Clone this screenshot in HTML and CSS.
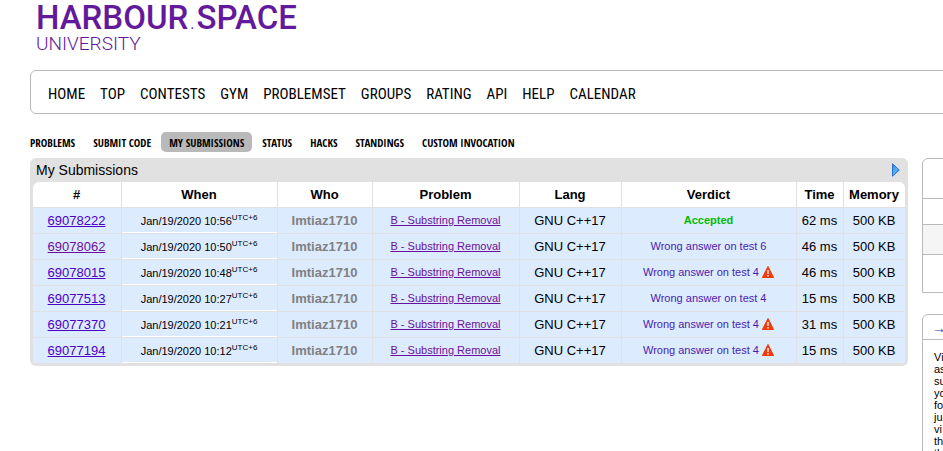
FILE: index.html
```html
<!DOCTYPE html>
<html lang="en">
<head>
<meta charset="utf-8">
<title>My Submissions</title>
<link rel="stylesheet" href="styles.css">
</head>
<body>
<div class="page">
  <header class="logo">
    <div class="logo-name">HARBOUR<span class="logo-dot">.</span>SPACE</div>
    <div class="logo-sub">UNIVERSITY</div>
  </header>
  <nav class="menu">
    <a href="#">HOME</a><a href="#">TOP</a><a href="#">CONTESTS</a><a href="#">GYM</a><a href="#">PROBLEMSET</a><a href="#">GROUPS</a><a href="#">RATING</a><a href="#">API</a><a href="#">HELP</a><a href="#">CALENDAR</a>
  </nav>
  <div class="columns">
    <main>
      <nav class="submenu">
        <a href="#">PROBLEMS</a><a href="#">SUBMIT CODE</a><a href="#" class="current">MY SUBMISSIONS</a><a href="#">STATUS</a><a href="#">HACKS</a><a href="#">STANDINGS</a><a href="#">CUSTOM INVOCATION</a>
      </nav>
      <section class="datatable">
        <div class="title">
          <span>My Submissions</span>
          <svg class="arrow" viewBox="0 0 8 14" width="8" height="14" aria-hidden="true">
            <defs><linearGradient id="blue" x1="0" y1="0" x2="1" y2="1"><stop offset="0" stop-color="#2f80d8"/><stop offset=".5" stop-color="#58b4f5"/><stop offset="1" stop-color="#2463c0"/></linearGradient></defs>
            <path d="M.5.8 7.3 7 .5 13.200z" fill="url(#blue)" stroke="#2b6fd0"/>
          </svg>
        </div>
        <table>
          <colgroup><col class="c-id"><col class="c-when"><col class="c-who"><col class="c-problem"><col class="c-lang"><col><col class="c-time"><col class="c-memory"></colgroup>
          <thead>
            <tr><th>#</th><th>When</th><th>Who</th><th>Problem</th><th>Lang</th><th>Verdict</th><th>Time</th><th>Memory</th></tr>
          </thead>
          <tbody>
            <tr><td><a href="#">69078222</a></td><td class="when">Jan/19/2020 10:56<sup>UTC+6</sup></td><td class="who">Imtiaz1710</td><td class="problem"><a href="#">B - Substring Removal</a></td><td>GNU C++17</td><td class="verdict"><span class="accepted">Accepted</span></td><td>62 ms</td><td>500 KB</td></tr>
            <tr><td><a href="#" class="visited">69078062</a></td><td class="when">Jan/19/2020 10:50<sup>UTC+6</sup></td><td class="who">Imtiaz1710</td><td class="problem"><a href="#">B - Substring Removal</a></td><td>GNU C++17</td><td class="verdict">Wrong answer on test 6</td><td>46 ms</td><td>500 KB</td></tr>
            <tr><td><a href="#">69078015</a></td><td class="when">Jan/19/2020 10:48<sup>UTC+6</sup></td><td class="who">Imtiaz1710</td><td class="problem"><a href="#">B - Substring Removal</a></td><td>GNU C++17</td><td class="verdict">Wrong answer on test 4 <svg class="warn" viewBox="0 0 12 12" width="12" height="12"><path d="M6 .5 11.600 11.500H.4z" fill="#f03c0a" stroke="#f03c0a" stroke-linejoin="round"/><path d="M6 4v4M6 9v1.500" stroke="#ffe9dc" stroke-width="1.500"/></svg></td><td>46 ms</td><td>500 KB</td></tr>
            <tr><td><a href="#">69077513</a></td><td class="when">Jan/19/2020 10:27<sup>UTC+6</sup></td><td class="who">Imtiaz1710</td><td class="problem"><a href="#">B - Substring Removal</a></td><td>GNU C++17</td><td class="verdict">Wrong answer on test 4</td><td>15 ms</td><td>500 KB</td></tr>
            <tr><td><a href="#">69077370</a></td><td class="when">Jan/19/2020 10:21<sup>UTC+6</sup></td><td class="who">Imtiaz1710</td><td class="problem"><a href="#">B - Substring Removal</a></td><td>GNU C++17</td><td class="verdict">Wrong answer on test 4 <svg class="warn" viewBox="0 0 12 12" width="12" height="12"><path d="M6 .5 11.600 11.500H.4z" fill="#f03c0a" stroke="#f03c0a" stroke-linejoin="round"/><path d="M6 4v4M6 9v1.500" stroke="#ffe9dc" stroke-width="1.500"/></svg></td><td>31 ms</td><td>500 KB</td></tr>
            <tr><td><a href="#">69077194</a></td><td class="when">Jan/19/2020 10:12<sup>UTC+6</sup></td><td class="who">Imtiaz1710</td><td class="problem"><a href="#">B - Substring Removal</a></td><td>GNU C++17</td><td class="verdict">Wrong answer on test 4 <svg class="warn" viewBox="0 0 12 12" width="12" height="12"><path d="M6 .5 11.600 11.500H.4z" fill="#f03c0a" stroke="#f03c0a" stroke-linejoin="round"/><path d="M6 4v4M6 9v1.500" stroke="#ffe9dc" stroke-width="1.500"/></svg></td><td>15 ms</td><td>500 KB</td></tr>
          </tbody>
        </table>
      </section>
    </main>
    <aside>
      <div class="box contest">
        <div class="contest-name"></div>
        <div class="contest-state"></div>
        <div class="contest-stripe"></div>
        <div class="contest-foot"></div>
      </div>
      <div class="box">
        <div class="caption">→</div>
        <p class="note">Vi<br>as<br>su<br>yo<br>fo<br>ju<br>vi<br>th<br>th</p>
      </div>
    </aside>
  </div>
</div>
</body>
</html>
```

FILE: styles.css
```css
* { box-sizing: border-box; }

body {
  margin: 0;
  overflow: hidden;
  background: #fff;
  color: #000;
  font: 13px/16px "Liberation Sans", Arial, sans-serif;
}

/* The sidebar runs past the right edge of the window. */
.page {
  width: calc(100% + 200px);
  padding-left: 30px;
}

.logo {
  height: 70px;
  padding-left: 6px;
  color: #63199b;
  font-family: Roboto, sans-serif;
}
.logo-name { font-size: 33px; line-height: 36px; font-weight: 500; }
.logo-dot { margin: 0 2px; font-size: 16px; line-height: 16px; font-weight: 400; }
.logo-sub { font-size: 19px; line-height: 16px; font-weight: 300; }

.menu {
  display: flex;
  gap: 15px;
  height: 44px;
  padding-left: 17px;
  border: 1px solid #b9b9b9;
  border-radius: 6px;
  font: 15px/46px "Roboto Condensed", sans-serif;
}
.menu a, .submenu a { color: #000; text-decoration: none; white-space: nowrap; }

.columns {
  display: grid;
  grid-template-columns: minmax(0, 1fr) 221px;
  column-gap: 14px;
}

.submenu {
  display: flex;
  gap: 2px;
  height: 20px;
  margin: 18px 0 6px -8px;
  font: bold 11px/22px "Liberation Sans Narrow", "Open Sans Condensed", "Roboto Condensed", sans-serif;
}
.submenu a { padding: 0 8px; border-radius: 5px; }
.submenu .current { background: #b9b9b9; }

.datatable {
  padding: 0 3px 3px;
  background: #e1e1e1;
  border-radius: 6px;
}
.title {
  display: flex;
  justify-content: space-between;
  align-items: center;
  height: 24px;
  padding: 0 5px 0 3px;
  font-size: 14px;
}

table {
  width: 100%;
  table-layout: fixed;
  border-spacing: 0;
  border-radius: 6px 6px 0 0;
  background: #fff;
  overflow: hidden;
}
.c-id { width: 89px; }
.c-when { width: 156px; }
.c-who { width: 95px; }
.c-problem { width: 147px; }
.c-lang { width: 102px; }
.c-time { width: 47px; }
.c-memory { width: 61px; }

th, td {
  height: 26px;
  padding: 0 1px 0 0;
  border-right: 1px solid #e1e1e1;
  border-bottom: 1px solid #e1e1e1;
  text-align: center;
  white-space: nowrap;
}
th:last-child, td:last-child { border-right: 0; }
tbody tr:last-child td { height: 25px; border-bottom: 0; }
td { background: #ddebff; }
td a { color: #4b00c8; }
td .visited, .problem a { color: #6a0f9c; }
.when, .problem, .verdict { font-size: 11px; }
.problem, .verdict { padding-bottom: 1px; }
.when { box-shadow: inset 0 -1px #fff; }
sup { font-size: 8px; line-height: 8px; vertical-align: 5px; }
.who { color: #808080; font-weight: bold; }
.verdict { color: #4a1bb0; }
.accepted { color: #0b0; font-weight: bold; }
.warn { vertical-align: -2px; }

aside { padding-top: 44px; }
.box {
  margin-bottom: 21px;
  border: 1px solid #b9b9b9;
  border-radius: 6px 0 0 0;
  overflow: hidden;
}
.contest > div + div { border-top: 1px solid #b9b9b9; }
.contest-name { height: 39px; }
.contest-state { height: 26px; }
.contest-stripe { height: 30px; background: #f5f5f5; }
.contest-foot { height: 38px; }
.caption {
  height: 25px;
  padding-left: 9px;
  border-bottom: 1px solid #b9b9b9;
  color: #3b3bb0;
  font-size: 14px;
  line-height: 26px;
}
.note {
  margin: 0;
  padding: 11px;
  font-size: 11px;
  line-height: 12px;
}
```
